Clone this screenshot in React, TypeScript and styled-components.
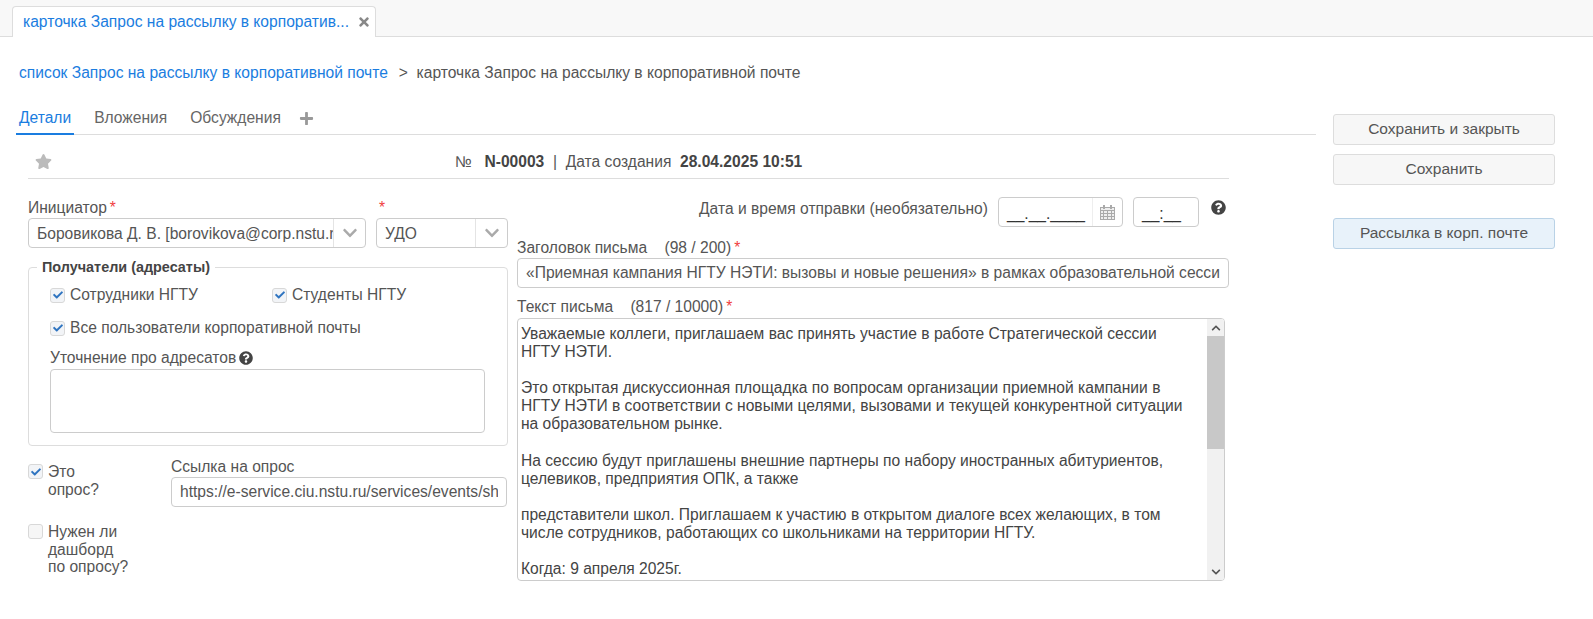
import styled, { createGlobalStyle } from 'styled-components';
import { FaCheck, FaChevronDown, FaPlus, FaQuestionCircle, FaStar, FaTimes, FaChevronUp } from 'react-icons/fa';

const GlobalStyle = createGlobalStyle`
  html, body {
    margin: 0;
    background: #fff;
    font-family: "Liberation Sans", Arial, sans-serif;
    font-size: 15.6px;
    color: #555;
  }
  * { box-sizing: border-box; }
`;

const TabStrip = styled.div`
  height: 37px;
  padding: 6px 0 0 12px;
  background: #f8f8f8;
  border-bottom: 1px solid #ddd;
`;

const OpenTab = styled.div`
  width: 364px;
  height: 31px;
  padding: 0 4px 0 10px;
  display: flex;
  align-items: center;
  justify-content: space-between;
  background: #fff;
  border: 1px solid #ddd;
  border-bottom: none;
  border-radius: 4px 4px 0 0;
  color: #1a7de0;
  svg { color: #888; font-size: 14px; }
`;

const Page = styled.div`
  display: flex;
  padding-left: 16px;
`;

const Main = styled.div`
  width: 1300px;
`;

const Breadcrumb = styled.div`
  height: 68px;
  padding: 26px 0 0 3px;
  line-height: 20px;
  display: flex;
  color: #555;
`;

const CrumbLink = styled.a`
  color: #1a7de0;
  margin-right: 11px;
`;

const Tabs = styled.div`
  height: 30px;
  display: flex;
  border-bottom: 1px solid #ddd;
`;

const TabItem = styled.div<{ $active?: boolean }>`
  height: 30px;
  line-height: 26px;
  padding: 0 3px;
  margin-right: 17px;
  color: ${props => (props.$active ? '#1a7de0' : '#666')};
  border-bottom: 2px solid ${props => (props.$active ? '#1a7de0' : 'transparent')};
`;

const AddTab = styled.div`
  padding-top: 6px;
  margin-left: -2px;
  color: #999;
  font-size: 15px;
  line-height: 13px;
`;

const Card = styled.div`
  width: 1201px;
  margin-left: 12px;
`;

const CardHeader = styled.div`
  height: 44px;
  padding: 18px 7px 0;
  display: grid;
  grid-template-columns: 1fr auto 1fr;
  border-bottom: 1px solid #ddd;
  line-height: 18px;
  svg { color: #bbb; font-size: 17px; }
`;

const HeaderInfo = styled.div`
  white-space: pre;
  b { color: #444; }
`;

const FormGrid = styled.div`
  display: grid;
  grid-template-columns: 480px 712px;
  gap: 9px;
`;

const LeftColumn = styled.div`
  padding-top: 18px;
`;

const SelectRow = styled.div`
  display: grid;
  grid-template-columns: 338px 132px;
  gap: 10px;
`;

const FieldLabel = styled.div<{ $top?: number }>`
  height: 20px;
  margin-top: ${props => props.$top || 0}px;
  line-height: 20px;
  white-space: pre;
`;

const SelectLabel = styled(FieldLabel)`
  line-height: 22px;
`;

const Required = styled.span`
  color: #f04040;
  margin-left: 3px;
`;

const Select = styled.div`
  height: 30px;
  margin-top: 1px;
  display: flex;
  border: 1px solid #ccc;
  border-radius: 4px;
`;

const SelectValue = styled.div`
  flex: 1;
  min-width: 0;
  padding-left: 8px;
  line-height: 30px;
  overflow: hidden;
  white-space: nowrap;
`;

const SelectArrow = styled.div`
  flex: none;
  width: 32px;
  display: flex;
  align-items: center;
  justify-content: center;
  border-left: 1px solid #e4e4e4;
  color: #aaa;
  font-size: 16px;
`;

const Recipients = styled.fieldset`
  margin: 11px 0 0;
  padding: 0 21px 12px;
  border: 1px solid #ddd;
  border-radius: 4px;
`;

const RecipientsTitle = styled.legend`
  margin-left: -13px;
  padding: 0 5px;
  font-size: 14.4px;
  line-height: 16px;
  font-weight: bold;
  color: #444;
`;

const CheckRow = styled.div<{ $top: number }>`
  display: flex;
  margin-top: ${props => props.$top}px;
`;

const CheckItem = styled.div<{ $width?: number }>`
  display: flex;
  align-items: center;
  height: 20px;
  width: ${props => (props.$width ? `${props.$width}px` : 'auto')};
`;

const Box = styled.div<{ $disabled?: boolean }>`
  flex: none;
  width: 15px;
  height: 15px;
  margin-right: 5px;
  display: flex;
  align-items: center;
  justify-content: center;
  background: ${props => (props.$disabled ? '#f6f6f6' : '#f2f4f7')};
  border: 1px solid #d8d8d8;
  border-radius: 3px;
  color: #2f74c0;
  font-size: 10px;
`;

const HintLabel = styled.div`
  height: 20px;
  margin-top: 10px;
  line-height: 20px;
  display: flex;
  align-items: center;
  svg { color: #444; font-size: 14px; margin-left: 3px; }
`;

const NoteArea = styled.textarea`
  display: block;
  width: 435px;
  height: 64px;
  margin-top: 1px;
  border: 1px solid #ccc;
  border-radius: 4px;
  resize: none;
`;

const SurveyGrid = styled.div`
  display: grid;
  grid-template-columns: 143px 336px;
`;

const SurveyChecks = styled.div`
  padding-top: 18px;
`;

const SurveyCheck = styled.div<{ $top?: number }>`
  display: flex;
  align-items: flex-start;
  margin-top: ${props => props.$top || 0}px;
  line-height: 17.5px;
`;

const SurveyText = styled.div`
  margin-top: -1px;
`;

const SurveyLink = styled.div`
  padding-top: 11px;
`;

const TextInput = styled.input`
  display: block;
  width: 100%;
  height: 30px;
  padding: 0 8px;
  border: 1px solid #ccc;
  border-radius: 4px;
  font: 15.6px "Liberation Sans", Arial, sans-serif;
  color: #555;
  outline: none;
`;

const TitleInput = styled(TextInput)`
  width: 712px;
`;

const RightColumn = styled.div`
  padding-top: 18px;
`;

const DateRow = styled.div`
  height: 41px;
  padding-right: 3px;
  display: flex;
  justify-content: flex-end;
  svg.help { color: #444; font-size: 15px; margin: 3px 0 0 12px; }
`;

const DateLabel = styled.div`
  line-height: 24px;
  margin-right: 10px;
`;

const DateBox = styled.div`
  width: 125px;
  height: 30px;
  display: flex;
  border: 1px solid #ccc;
  border-radius: 4px;
`;

const MaskText = styled.div`
  flex: 1;
  padding-left: 8px;
  line-height: 32px;
  color: #333;
  white-space: nowrap;
  overflow: hidden;
`;

const CalendarCell = styled.div`
  width: 30px;
  display: flex;
  align-items: center;
  justify-content: center;
  border-left: 1px solid #eee;
`;

const TimeBox = styled(DateBox)`
  width: 66px;
  margin-left: 10px;
`;

const LetterBox = styled.div`
  width: 708px;
  height: 263px;
  margin-top: 1px;
  display: flex;
  border: 1px solid #ccc;
  border-radius: 4px;
  overflow: hidden;
`;

const LetterText = styled.div`
  flex: 1;
  padding: 6px 0 0 3px;
  line-height: 18.1px;
  white-space: pre;
  color: #444;
  overflow: hidden;
`;

const ScrollTrack = styled.div`
  flex: none;
  width: 17px;
  display: flex;
  flex-direction: column;
  background: #f1f1f1;
`;

const ScrollButton = styled.div`
  height: 17px;
  display: flex;
  align-items: center;
  justify-content: center;
  background: #f1f1f1;
  color: #555;
  font-size: 10px;
`;

const ScrollThumb = styled.div`
  height: 113px;
  background: #c8c8c8;
`;

const ScrollRest = styled.div`
  flex: 1;
`;

const Side = styled.div`
  width: 222px;
  margin-left: 17px;
  padding-top: 77px;
`;

const ActionButton = styled.div<{ $accent?: boolean; $top?: number }>`
  height: 31px;
  margin-top: ${props => props.$top || 0}px;
  text-align: center;
  line-height: 28px;
  font-size: 15.5px;
  color: #555;
  background: ${props => (props.$accent ? '#e8f2fa' : '#f7f7f7')};
  border: 1px solid ${props => (props.$accent ? '#b9d2e6' : '#ddd')};
  border-radius: 3px;
`;

const letter = `Уважаемые коллеги, приглашаем вас принять участие в работе Стратегической сессии
НГТУ НЭТИ.

Это открытая дискуссионная площадка по вопросам организации приемной кампании в
НГТУ НЭТИ в соответствии с новыми целями, вызовами и текущей конкурентной ситуации
на образовательном рынке.

На сессию будут приглашены внешние партнеры по набору иностранных абитуриентов,
целевиков, предприятия ОПК, а также

представители школ. Приглашаем к участию в открытом диалоге всех желающих, в том
числе сотрудников, работающих со школьниками на территории НГТУ.

Когда: 9 апреля 2025г.`;

function CalendarIcon() {
  return (
    <svg width="17" height="17" viewBox="0 0 17 17" fill="none" stroke="#aaa" strokeWidth="1">
      <rect x="1.5" y="3.5" width="14" height="12" fill="#eee" />
      <path d="M1.5 6.5h14M1.5 9.5h14M1.5 12.5h14M4.5 6.5v9M8.5 6.5v9M12.5 6.5v9" />
      <path d="M5 1v4M12 1v4" strokeWidth="2" />
    </svg>
  );
}

function Check({ disabled }: { disabled?: boolean }) {
  return <Box $disabled={disabled}>{!disabled && <FaCheck />}</Box>;
}

export default function App() {
  return (
    <>
      <GlobalStyle />
      <TabStrip>
        <OpenTab>
          карточка Запрос на рассылку в корпоратив...
          <FaTimes />
        </OpenTab>
      </TabStrip>
      <Page>
        <Main>
          <Breadcrumb>
            <CrumbLink>список Запрос на рассылку в корпоративной почте</CrumbLink>
            &gt;&nbsp;&nbsp;карточка Запрос на рассылку в корпоративной почте
          </Breadcrumb>
          <Tabs>
            <TabItem $active>Детали</TabItem>
            <TabItem>Вложения</TabItem>
            <TabItem>Обсуждения</TabItem>
            <AddTab><FaPlus /></AddTab>
          </Tabs>
          <Card>
            <CardHeader>
              <FaStar />
              <HeaderInfo>
                {'№   '}<b>N-00003</b>{'  |  Дата создания  '}<b>28.04.2025 10:51</b>
              </HeaderInfo>
            </CardHeader>
            <FormGrid>
              <LeftColumn>
                <SelectRow>
                  <div>
                    <SelectLabel>Инициатор<Required>*</Required></SelectLabel>
                    <Select>
                      <SelectValue>Боровикова Д. В. [borovikova@corp.nstu.r</SelectValue>
                      <SelectArrow><FaChevronDown /></SelectArrow>
                    </Select>
                  </div>
                  <div>
                    <SelectLabel><Required>*</Required></SelectLabel>
                    <Select>
                      <SelectValue>УДО</SelectValue>
                      <SelectArrow><FaChevronDown /></SelectArrow>
                    </Select>
                  </div>
                </SelectRow>
                <Recipients>
                  <RecipientsTitle>Получатели (адресаты)</RecipientsTitle>
                  <CheckRow $top={10}>
                    <CheckItem $width={222}><Check />Сотрудники НГТУ</CheckItem>
                    <CheckItem><Check />Студенты НГТУ</CheckItem>
                  </CheckRow>
                  <CheckRow $top={13}>
                    <CheckItem><Check />Все пользователи корпоративной почты</CheckItem>
                  </CheckRow>
                  <HintLabel>Уточнение про адресатов<FaQuestionCircle /></HintLabel>
                  <NoteArea />
                </Recipients>
                <SurveyGrid>
                  <SurveyChecks>
                    <SurveyCheck>
                      <Check />
                      <SurveyText>Это<br />опрос?</SurveyText>
                    </SurveyCheck>
                    <SurveyCheck $top={26}>
                      <Check disabled />
                      <SurveyText>Нужен ли<br />дашборд<br />по опросу?</SurveyText>
                    </SurveyCheck>
                  </SurveyChecks>
                  <SurveyLink>
                    <FieldLabel>Ссылка на опрос</FieldLabel>
                    <TextInput readOnly value="https://e-service.ciu.nstu.ru/services/events/sh" />
                  </SurveyLink>
                </SurveyGrid>
              </LeftColumn>
              <RightColumn>
                <DateRow>
                  <DateLabel>Дата и время отправки (необязательно)</DateLabel>
                  <DateBox>
                    <MaskText>__.__.____</MaskText>
                    <CalendarCell><CalendarIcon /></CalendarCell>
                  </DateBox>
                  <TimeBox>
                    <MaskText>__:__</MaskText>
                  </TimeBox>
                  <FaQuestionCircle className="help" />
                </DateRow>
                <FieldLabel>Заголовок письма    (98 / 200)<Required>*</Required></FieldLabel>
                <TitleInput readOnly value="«Приемная кампания НГТУ НЭТИ: вызовы и новые решения» в рамках образовательной сесси" />
                <FieldLabel $top={9}>Текст письма    (817 / 10000)<Required>*</Required></FieldLabel>
                <LetterBox>
                  <LetterText>{letter}</LetterText>
                  <ScrollTrack>
                    <ScrollButton><FaChevronUp /></ScrollButton>
                    <ScrollThumb />
                    <ScrollRest />
                    <ScrollButton><FaChevronDown /></ScrollButton>
                  </ScrollTrack>
                </LetterBox>
              </RightColumn>
            </FormGrid>
          </Card>
        </Main>
        <Side>
          <ActionButton>Сохранить и закрыть</ActionButton>
          <ActionButton $top={9}>Сохранить</ActionButton>
          <ActionButton $top={33} $accent>Рассылка в корп. почте</ActionButton>
        </Side>
      </Page>
    </>
  );
}
